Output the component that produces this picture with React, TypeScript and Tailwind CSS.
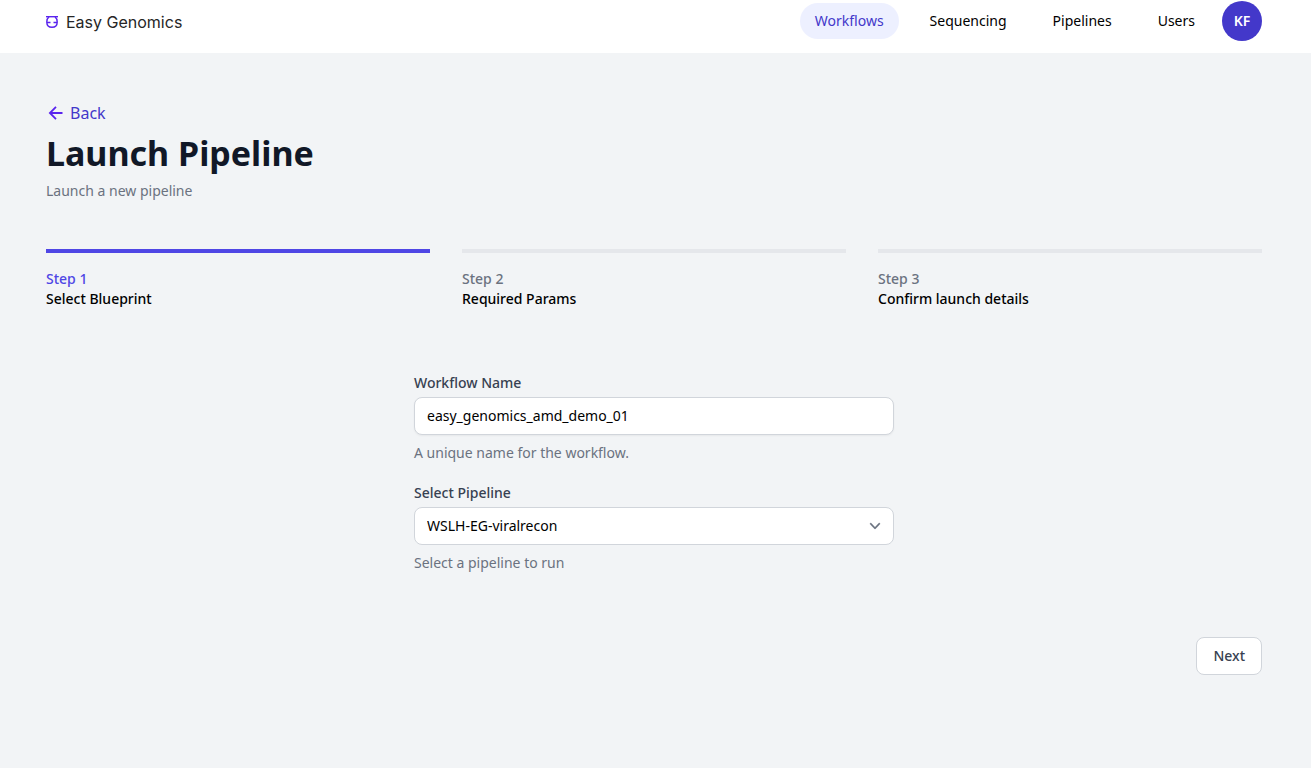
import React from "react";

const navItems = ["Workflows", "Sequencing", "Pipelines", "Users"];

const steps = [
  { label: "Step 1", title: "Select Blueprint", active: true },
  { label: "Step 2", title: "Required Params", active: false },
  { label: "Step 3", title: "Confirm launch details", active: false },
];

function Logo() {
  return (
    <svg width="12" height="14" viewBox="0 0 12 14" fill="none" stroke="#5a24ee" strokeWidth="1.4" aria-hidden="true">
      <path d="M0 1.700h12" />
      <path d="M3 1.900C1.500 3 .8 4.900.8 7c0 3.200 2.100 5.300 5.200 5.300s5.200-2.100 5.200-5.300c0-2.100-.7-4-2.200-5.100" />
      <path d="M.8 7.500h3.700M7.500 7.500h3.700" />
    </svg>
  );
}

function Header() {
  return (
    <header className="h-[53px] bg-white pr-[3px]">
      <div className="mx-auto flex max-w-7xl items-start justify-between px-8 pt-px">
        <a href="#home" className="flex h-[42px] items-center gap-2 font-['Inter',sans-serif] text-base text-[#262626]">
          <Logo />
          Easy Genomics
        </a>
        <div className="flex items-center gap-3">
          <nav className="flex gap-4">
            {navItems.map((item, i) => (
              <a
                key={item}
                href={"#" + item.toLowerCase()}
                className={
                  i === 0
                    ? "rounded-full bg-[#edf0ff] px-[15px] py-2 text-sm text-[#4338ca]"
                    : "rounded-full px-[15px] py-2 text-sm text-black"
                }
              >
                {item}
              </a>
            ))}
          </nav>
          <button type="button" className="size-10 rounded-full bg-[#4338ca] text-sm font-semibold text-white">
            KF
          </button>
        </div>
      </div>
    </header>
  );
}

export default function App() {
  return (
    <div className="min-h-screen bg-[#f2f4f6] font-['Noto_Sans',sans-serif] text-black">
      <Header />
      <main className="pr-[3px]">
        <div className="mx-auto max-w-7xl px-8 pt-12 pb-12">
          <a href="#back" className="flex w-fit items-center gap-1 text-base text-[#4338ca]">
            <svg width="20" height="20" viewBox="0 0 20 20" fill="none" stroke="#5a24ee" strokeWidth="1.8" aria-hidden="true">
              <path d="M16.500 10H4M10 3.900L3.900 10l6.100 6.100" />
            </svg>
            Back
          </a>
          <h1 className="mt-2 text-[34px] leading-10 font-bold text-[#111827]">Launch Pipeline</h1>
          <p className="mt-2 text-sm text-[#6b7280]">Launch a new pipeline</p>

          <ol className="mt-12 grid grid-cols-3 gap-8">
            {steps.map((step) => (
              <li
                key={step.label}
                className={
                  step.active
                    ? "border-t-4 border-[#4f46e5] pt-4 text-sm font-medium"
                    : "border-t-4 border-[#e5e7eb] pt-4 text-sm font-medium"
                }
              >
                <p className={step.active ? "text-[#4f46e5]" : "text-[#6b7280]"}>{step.label}</p>
                <p>{step.title}</p>
              </li>
            ))}
          </ol>

          <form>
            <div className="mx-auto mt-16 w-full max-w-[480px] text-sm">
              <label htmlFor="name" className="block font-medium text-[#374151]">
                Workflow Name
              </label>
              <input
                id="name"
                type="text"
                defaultValue="easy_genomics_amd_demo_01"
                className="mt-1 block h-[38px] w-full rounded-lg border border-[#d1d5db] bg-white px-3 pb-0.5 shadow-xs"
              />
              <p className="mt-2 text-[#6b7280]">A unique name for the workflow.</p>

              <label htmlFor="pipeline" className="mt-5 block font-medium text-[#374151]">
                Select Pipeline
              </label>
              <div className="relative mt-1">
                <select
                  id="pipeline"
                  className="block h-[38px] w-full appearance-none rounded-lg border border-[#d1d5db] bg-white px-3"
                >
                  <option>WSLH-EG-viralrecon</option>
                </select>
                <svg
                  className="pointer-events-none absolute top-[9px] right-[9px] size-5"
                  viewBox="0 0 20 20"
                  fill="#6b7280"
                  stroke="#6b7280"
                  strokeWidth="0.3"
                  aria-hidden="true"
                >
                  <path
                    fillRule="evenodd"
                    d="M5.230 7.210a.75.75 0 0 1 1.060.020L10 11.168l3.710-3.938a.75.75 0 1 1 1.080 1.040l-4.250 4.500a.75.75 0 0 1-1.080 0l-4.250-4.500a.75.75 0 0 1 .020-1.060Z"
                  />
                </svg>
              </div>
              <p className="mt-2 text-[#6b7280]">Select a pipeline to run</p>
            </div>

            <div className="mt-16 flex justify-end">
              <button
                type="button"
                className="h-[38px] rounded-lg border border-[#d1d5db] bg-white px-4 text-sm font-medium text-[#374151]"
              >
                Next
              </button>
            </div>
          </form>
        </div>
      </main>
    </div>
  );
}
